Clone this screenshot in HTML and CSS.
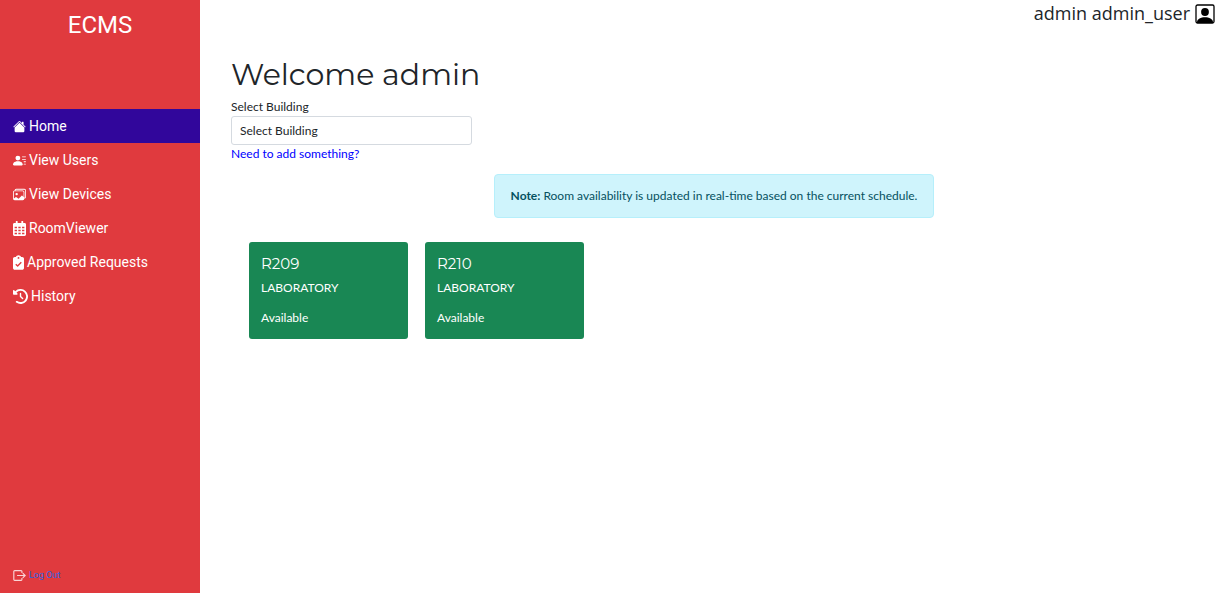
FILE: index.html
```
<!DOCTYPE html>
<html lang="en">
<head>
<meta charset="utf-8">
<meta name="viewport" content="width=device-width, initial-scale=1">
<title>ECMS</title>
<link rel="stylesheet" href="styles.css">
</head>
<body>
<div class="layout">
  <aside class="sidebar">
    <div class="brand">ECMS</div>
    <nav class="menu">
      <a class="menu-link active" href="#">
        <svg class="icon" width="13" height="13" viewBox="0 0 16 16"><path d="M8.7 1.5a1 1 0 0 0-1.4 0L.65 8.15a.5.5 0 0 0 .7.7L8 2.2l6.65 6.65a.5.5 0 0 0 .7-.7L13 5.8V2.5a.5.5 0 0 0-.5-.5h-1a.5.5 0 0 0-.5.5v1.3L8.7 1.5Z"/><path d="m8 3.3 6 6v4.2a1.5 1.5 0 0 1-1.5 1.5h-9A1.5 1.5 0 0 1 2 13.5V9.3l6-6Z"/></svg>
        <span>Home</span></a>
      <a class="menu-link" href="#">
        <svg class="icon" width="13" height="13" viewBox="0 0 16 16"><path d="M6 8a3 3 0 1 0 0-6 3 3 0 0 0 0 6Zm-5 6s-1 0-1-1 1-4 6-4 6 3 6 4-1 1-1 1H1ZM11 3.5a.5.5 0 0 1 .5-.5h4a.5.5 0 0 1 0 1h-4a.5.5 0 0 1-.5-.5Zm.5 2.5a.5.5 0 0 0 0 1h4a.5.5 0 0 0 0-1h-4Zm2 3a.5.5 0 0 0 0 1h2a.5.5 0 0 0 0-1h-2Zm0 3a.5.5 0 0 0 0 1h2a.5.5 0 0 0 0-1h-2Z"/></svg>
        <span>View Users</span></a>
      <a class="menu-link" href="#">
        <svg class="icon" width="13" height="13" viewBox="0 0 16 16"><path d="M4.5 9a1.5 1.5 0 1 0 0-3 1.5 1.5 0 0 0 0 3Z"/><path fill-rule="evenodd" d="M4 1h10a2 2 0 0 1 2 2v8a2 2 0 0 1-2 2 2 2 0 0 1-2 2H2a2 2 0 0 1-2-2V5a2 2 0 0 1 2-2 2 2 0 0 1 2-2Zm10 11a1 1 0 0 0 1-1V3a1 1 0 0 0-1-1H4a1 1 0 0 0-1 1h9a2 2 0 0 1 2 2v7ZM2 4a1 1 0 0 0-1 1v8l2.600-1.800a.5.5 0 0 1 .6.1l2.700 1.800 3.700-3.700a.5.5 0 0 1 .6-.1L13 11V5a1 1 0 0 0-1-1H2Z"/></svg>
        <span>View Devices</span></a>
      <a class="menu-link" href="#">
        <svg class="icon" width="13" height="15" viewBox="0 0 448 512"><path fill-rule="evenodd" d="M96 24a32 32 0 0 1 64 0v40h128V24a32 32 0 0 1 64 0v40h48c26 0 48 22 48 48v352c0 26-22 48-48 48H48c-26 0-48-22-48-48V112c0-26 22-48 48-48h48V24ZM56 192v56h80v-56H56Zm128 0v56h80v-56h-80Zm128 0v56h80v-56h-80ZM56 296v56h80v-56H56Zm128 0v56h80v-56h-80Zm128 0v56h80v-56h-80ZM56 400v56h80v-56H56Zm128 0v56h80v-56h-80Zm128 0v56h80v-56h-80Z"/></svg>
        <span>RoomViewer</span></a>
      <a class="menu-link" href="#">
        <svg class="icon" width="11" height="15" viewBox="0 0 384 512"><path fill-rule="evenodd" d="M192 0c-42 0-77 27-91 64H64C29 64 0 93 0 128v320c0 35 29 64 64 64h256c35 0 64-29 64-64V128c0-35-29-64-64-64h-37C269 27 234 0 192 0Zm0 64a32 32 0 1 1 0 64 32 32 0 0 1 0-64Zm115 204L179 396c-10 10-25 10-35 0l-64-64 34-34 47 47 112-111 34 34Z"/></svg>
        <span>Approved Requests</span></a>
      <a class="menu-link" href="#">
        <svg class="icon" width="15" height="15" viewBox="0 0 512 512"><path d="M75 75 41 41C26 26 0 37 0 58v110c0 13 11 24 24 24h110c21 0 32-26 17-41l-31-31a192 192 0 1 1 26 293c-14-10-34-7-44 8s-7 34 7 44a256 256 0 1 0-34-390Zm181 53c-13 0-24 11-24 24v104c0 6 3 12 7 17l72 72c9 9 25 9 34 0s9-25 0-34l-65-65v-94c0-13-11-24-24-24Z"/></svg>
        <span>History</span></a>
    </nav>
    <a class="logout" href="#">
      <svg class="icon" width="13" height="13" viewBox="0 0 16 16"><path d="M11 5V3a1 1 0 0 0-1-1H2a1 1 0 0 0-1 1v10a1 1 0 0 0 1 1h8a1 1 0 0 0 1-1v-2M5 8h10M12 5l3 3-3 3" fill="none" stroke="currentColor" stroke-width="1.400"/></svg>
      <span class="logout-text">Log Out</span></a>
  </aside>
  <div class="page">
    <header class="topbar">
      <span>admin admin_user</span>
      <svg class="avatar" width="20" height="20" viewBox="0 0 20 20" role="img" aria-label="Profile"><rect x="1" y="1" width="18" height="18" rx="1.500" fill="none" stroke="#000" stroke-width="1.300"/><circle cx="10" cy="8" r="3.900"/><path d="M2 19v-1c0-3 4-4.800 8-4.800s8 1.800 8 4.800v1Z"/></svg>
    </header>
    <main class="content">
      <h1 class="title">Welcome admin</h1>
      <label class="label" for="building">Select Building</label>
      <select class="select" id="building"><option>Select Building</option></select>
      <a class="add-link" href="#">Need to add something?</a>
      <div class="note" role="alert"><strong>Note:</strong> Room availability is updated in real-time based on the current schedule.</div>
      <section class="rooms">
        <article class="room">
          <h2 class="room-name">R209</h2>
          <p class="room-type">LABORATORY</p>
          <p class="room-status">Available</p>
        </article>
        <article class="room">
          <h2 class="room-name">R210</h2>
          <p class="room-type">LABORATORY</p>
          <p class="room-status">Available</p>
        </article>
      </section>
    </main>
  </div>
</div>
</body>
</html>
```
FILE: styles.css
```
* { box-sizing: border-box; }

body {
  margin: 0;
  font-family: Lato, "Open Sans", sans-serif;
  font-size: 12px;
  line-height: 18px;
  color: #212529;
  background: #fff;
}

a { text-decoration: none; }
h1, h2, p { margin: 0; }
.icon { flex: none; fill: currentColor; }

.layout {
  display: grid;
  grid-template-columns: 200px 1fr;
  min-height: 100vh;
}

.sidebar {
  display: flex;
  flex-direction: column;
  padding-bottom: 9px;
  background: #e03a3e;
  color: #fff;
  font-family: Roboto, sans-serif;
}

.brand {
  padding: 10px 0 69px;
  font-size: 24px;
  line-height: 30px;
  text-align: center;
}

.menu-link {
  display: flex;
  align-items: center;
  gap: 3px;
  height: 34px;
  padding: 0 13px;
  color: #fff;
  font-size: 14px;
}
.menu-link.active { background: #31069b; }

.logout {
  display: flex;
  align-items: center;
  gap: 3px;
  margin-top: auto;
  padding-left: 13px;
  color: #f9d5d6;
  font-size: 9px;
}
.logout-text { color: #2b62e0; }

.topbar {
  display: flex;
  justify-content: flex-end;
  align-items: center;
  gap: 5px;
  padding: 0 13px 0 0;
  font-family: "Open Sans", "Noto Sans", sans-serif;
  font-size: 18px;
  line-height: 27px;
}

.content {
  display: flex;
  flex-direction: column;
  align-items: flex-start;
  padding: 29px 31px;
}

.title {
  margin-bottom: 4px;
  font-family: Montserrat, Inter, sans-serif;
  font-size: 30px;
  font-weight: 400;
  line-height: 38px;
}

.select {
  width: 241px;
  height: 29px;
  padding: 0 8px;
  appearance: none;
  border: 1px solid #d5dae0;
  border-radius: 3px;
  background: #fff;
  color: inherit;
  font: inherit;
}

.add-link { color: #00f; }

.note {
  align-self: center;
  margin-top: 11px;
  padding: 12px 16px;
  border: 1px solid #b6effb;
  border-radius: 4px;
  background: #cff4fc;
  color: #055160;
}

.rooms {
  display: flex;
  flex-wrap: wrap;
  gap: 17px;
  padding: 24px 18px;
}

.room {
  width: 159px;
  padding: 12px;
  border-radius: 3px;
  background: #198754;
  color: #fff;
}
.room-name {
  margin-bottom: 6px;
  font-family: Montserrat, Inter, sans-serif;
  font-size: 15px;
  font-weight: 400;
  line-height: 19px;
}
.room-type { margin-bottom: 12px; }
```
